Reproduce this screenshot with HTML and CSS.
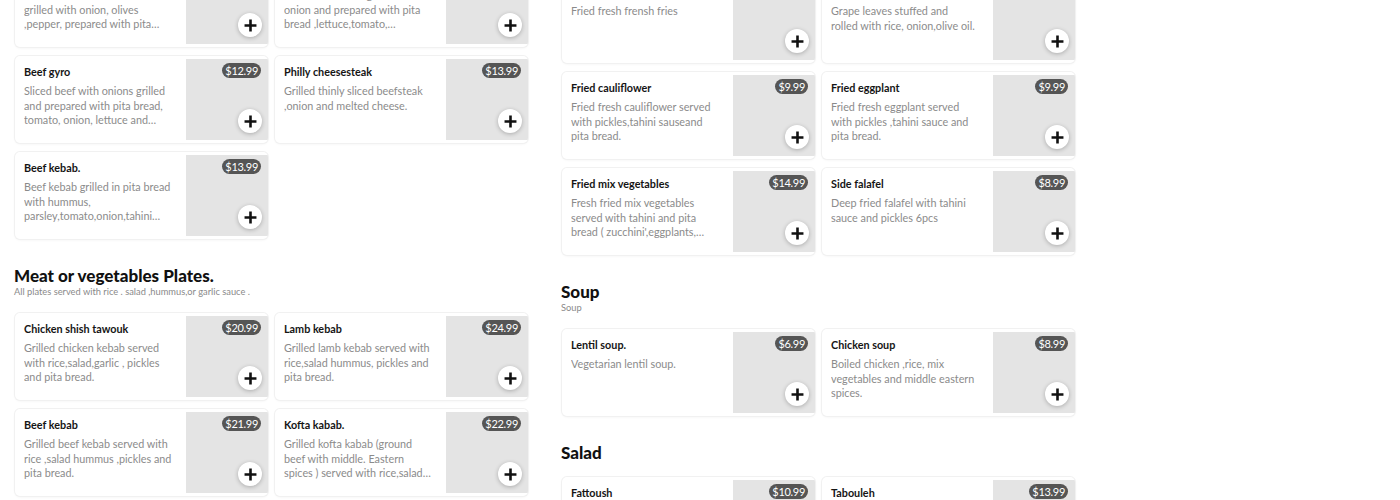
FILE: index.html
```html
<!DOCTYPE html>
<html lang="en">
<head>
<meta charset="utf-8">
<title>Menu</title>
<link rel="stylesheet" href="styles.css">
</head>
<body>
<svg width="0" height="0" class="defs">
  <symbol id="plus" viewBox="0 0 12 12"><path d="M6 0.5v11M0.5 6h11" stroke="#111" stroke-width="2.4" stroke-linecap="butt" fill="none"/></symbol>
</svg>
<main class="menu">
  <div class="col col-left">
    <section class="sec">
      <div class="grid">
        <article class="card"><div class="info"><h3 class="name">Chicken gyro</h3><p class="desc">Marinated chicken shawarma grilled with onion, olives ,pepper, prepared with pita bread and garlic sauce.</p></div><div class="pic"><span class="price">$11.99</span><button class="add"><svg><use href="#plus"/></svg></button></div></article>
        <article class="card"><div class="info"><h3 class="name">Lamb gyro</h3><p class="desc">Sliced lamb meat grilled with onion and prepared with pita bread ,lettuce,tomato, cucumbers,pickles and tahini sauce.</p></div><div class="pic"><span class="price">$12.99</span><button class="add"><svg><use href="#plus"/></svg></button></div></article>
        <article class="card"><div class="info"><h3 class="name">Beef gyro</h3><p class="desc">Sliced beef with onions grilled and prepared with pita bread, tomato, onion, lettuce and tahini sauce.</p></div><div class="pic"><span class="price">$12.99</span><button class="add"><svg><use href="#plus"/></svg></button></div></article>
        <article class="card"><div class="info"><h3 class="name">Philly cheesesteak</h3><p class="desc">Grilled thinly sliced beefsteak ,onion and melted cheese.</p></div><div class="pic"><span class="price">$13.99</span><button class="add"><svg><use href="#plus"/></svg></button></div></article>
        <article class="card"><div class="info"><h3 class="name">Beef kebab.</h3><p class="desc">Beef kebab grilled in pita bread with hummus, parsley,tomato,onion,tahini sauce and pickles.</p></div><div class="pic"><span class="price">$13.99</span><button class="add"><svg><use href="#plus"/></svg></button></div></article>
      </div>
    </section>
    <section class="sec">
      <h2 class="title">Meat or vegetables Plates.</h2>
      <p class="sub">All plates served with rice . salad ,hummus,or garlic sauce .</p>
      <div class="grid">
        <article class="card"><div class="info"><h3 class="name">Chicken shish tawouk</h3><p class="desc">Grilled chicken kebab served with rice,salad,garlic , pickles and pita bread.</p></div><div class="pic"><span class="price">$20.99</span><button class="add"><svg><use href="#plus"/></svg></button></div></article>
        <article class="card"><div class="info"><h3 class="name">Lamb kebab</h3><p class="desc">Grilled lamb kebab served with rice,salad hummus, pickles and pita bread.</p></div><div class="pic"><span class="price">$24.99</span><button class="add"><svg><use href="#plus"/></svg></button></div></article>
        <article class="card"><div class="info"><h3 class="name">Beef kebab</h3><p class="desc">Grilled beef kebab served with rice ,salad hummus ,pickles and pita bread.</p></div><div class="pic"><span class="price">$21.99</span><button class="add"><svg><use href="#plus"/></svg></button></div></article>
        <article class="card"><div class="info"><h3 class="name">Kofta kabab.</h3><p class="desc">Grilled kofta kabab (ground beef with middle. Eastern spices ) served with rice,salad hummus ,pickles and pita bread.</p></div><div class="pic"><span class="price">$22.99</span><button class="add"><svg><use href="#plus"/></svg></button></div></article>
      </div>
    </section>
  </div>
  <div class="col col-right">
    <section class="sec">
      <div class="grid">
        <article class="card"><div class="info"><h3 class="name">French fries</h3><p class="desc">Fried fresh frensh fries</p></div><div class="pic"><span class="price">$4.99</span><button class="add"><svg><use href="#plus"/></svg></button></div></article>
        <article class="card"><div class="info"><h3 class="name">Grape leaves</h3><p class="desc">Grape leaves stuffed and rolled&nbsp;with rice, onion,olive oil.</p></div><div class="pic"><span class="price">$7.99</span><button class="add"><svg><use href="#plus"/></svg></button></div></article>
        <article class="card"><div class="info"><h3 class="name">Fried cauliflower</h3><p class="desc">Fried fresh cauliflower served with pickles,tahini sauseand pita bread.</p></div><div class="pic"><span class="price">$9.99</span><button class="add"><svg><use href="#plus"/></svg></button></div></article>
        <article class="card"><div class="info"><h3 class="name">Fried eggplant</h3><p class="desc">Fried fresh eggplant served with pickles ,tahini sauce and pita bread.</p></div><div class="pic"><span class="price">$9.99</span><button class="add"><svg><use href="#plus"/></svg></button></div></article>
        <article class="card"><div class="info"><h3 class="name">Fried mix vegetables</h3><p class="desc">Fresh fried mix vegetables served with tahini and pita bread ( zucchini',eggplants, cauliflower and potato).</p></div><div class="pic"><span class="price">$14.99</span><button class="add"><svg><use href="#plus"/></svg></button></div></article>
        <article class="card"><div class="info"><h3 class="name">Side falafel</h3><p class="desc">Deep fried falafel with tahini sauce and pickles 6pcs</p></div><div class="pic"><span class="price">$8.99</span><button class="add"><svg><use href="#plus"/></svg></button></div></article>
      </div>
    </section>
    <section class="sec">
      <h2 class="title">Soup</h2>
      <p class="sub">Soup</p>
      <div class="grid">
        <article class="card"><div class="info"><h3 class="name">Lentil soup.</h3><p class="desc">Vegetarian lentil soup.</p></div><div class="pic"><span class="price">$6.99</span><button class="add"><svg><use href="#plus"/></svg></button></div></article>
        <article class="card"><div class="info"><h3 class="name">Chicken soup</h3><p class="desc">Boiled chicken ,rice, mix vegetables and middle eastern spices.</p></div><div class="pic"><span class="price">$8.99</span><button class="add"><svg><use href="#plus"/></svg></button></div></article>
      </div>
    </section>
    <section class="sec">
      <h2 class="title">Salad</h2>
      <div class="grid">
        <article class="card"><div class="info"><h3 class="name">Fattoush</h3><p class="desc">Lettuce, tomato, cucumber, onion, parsley, mint and toasted pita bread with sumac dressing.</p></div><div class="pic"><span class="price">$10.99</span><button class="add"><svg><use href="#plus"/></svg></button></div></article>
        <article class="card"><div class="info"><h3 class="name">Tabouleh</h3><p class="desc">Chopped parsley, tomato, onion, bulgur, lemon juice and olive oil.</p></div><div class="pic"><span class="price">$13.99</span><button class="add"><svg><use href="#plus"/></svg></button></div></article>
      </div>
    </section>
  </div>
</main>
</body>
</html>
```
FILE: styles.css
```css
* { box-sizing: border-box; }
html, body { margin: 0; padding: 0; background: #fff; }
body {
  font-family: Lato, "Open Sans", Arial, sans-serif;
  color: #111;
  height: 500px;
  overflow: hidden;
}
.defs { position: absolute; }
.menu {
  display: flex;
  gap: 20px;
  padding-left: 14px;
  align-items: flex-start;
}
.col { width: 527px; display: flex; flex-direction: column; }
.col-left { margin-top: -40px; }
.col-right { margin-top: -24px; }
.sec + .sec { margin-top: 27px; }
.title {
  margin: 0;
  font-size: 17px;
  line-height: 20px;
  font-weight: 900;
  color: #111;
}
.sub {
  margin: 1px 0 3px;
  font-size: 9.3px;
  line-height: 10px;
  color: #8a8a8a;
}
.title + .grid { margin-top: 14px; }
.sub + .grid { margin-top: 16px; }
.grid {
  display: grid;
  grid-template-columns: 253px 253px;
  column-gap: 7px;
  row-gap: 9px;
  padding-left: 1px;
}
.card {
  display: flex;
  height: 87px;
  background: #fff;
  border-radius: 5px;
  box-shadow: 0 0 0 1px #f1f1f1, 0 1px 3px rgba(0,0,0,0.06);
  overflow: hidden;
}
.info {
  flex: 1;
  min-width: 0;
  padding: 9px 14px 0 9px;
}
.name {
  margin: 0;
  font-size: 10.8px;
  line-height: 14px;
  font-weight: 700;
  color: #151515;
}
.desc {
  margin: 5px 0 0;
  font-size: 10.8px;
  line-height: 14.5px;
  color: #8b8b8b;
  display: -webkit-box;
  -webkit-line-clamp: 3;
  -webkit-box-orient: vertical;
  overflow: hidden;
}
.pic {
  position: relative;
  flex: none;
  width: 82px;
  height: 81px;
  margin: 3px 0 3px 0;
  background: #e4e4e4;
}
.price {
  position: absolute;
  top: 4px;
  right: 7px;
  height: 15px;
  padding: 0 3px;
  border-radius: 8px;
  background: #555;
  color: #fff;
  font-size: 11px;
  line-height: 15px;
  letter-spacing: -0.3px;
}
.add {
  position: absolute;
  right: 6px;
  bottom: 7px;
  width: 24px;
  height: 24px;
  padding: 0;
  border: 0;
  border-radius: 50%;
  background: #fff;
  box-shadow: 0 1px 4px rgba(0,0,0,0.25);
  display: flex;
  align-items: center;
  justify-content: center;
}
.add svg { width: 13px; height: 13px; }
```
